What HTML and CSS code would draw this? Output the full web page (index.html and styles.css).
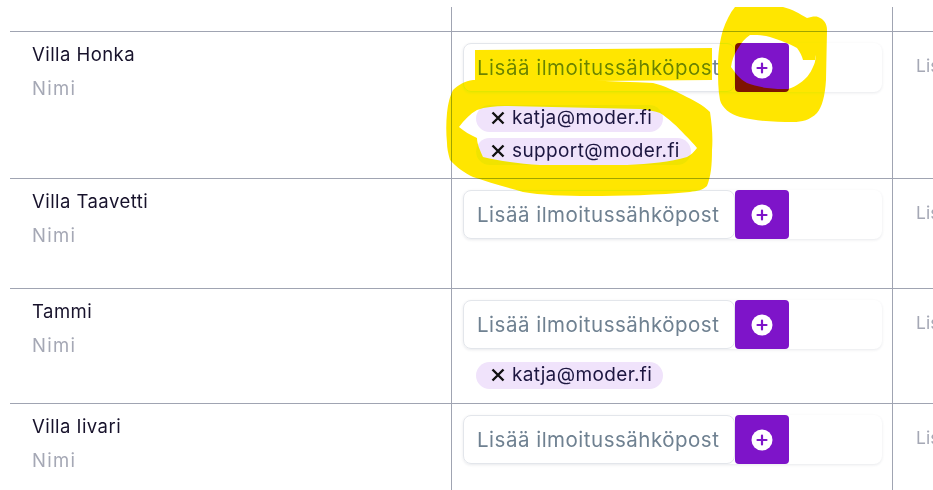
FILE: index.html
```html
<!DOCTYPE html>
<html lang="fi">
<head>
<meta charset="utf-8">
<title>Ilmoitussähköpostit</title>
<link rel="stylesheet" href="styles.css">
</head>
<body>
<div class="table">
  <div class="row stub"><div class="cell name"></div><div class="cell mail"></div><div class="cell extra"></div></div>

  <div class="row r1">
    <div class="cell name"><div class="title">Villa Honka</div><div class="label">Nimi</div></div>
    <div class="cell mail">
      <div class="field"><div class="input">Lisää ilmoitussähköpost</div><button class="add"><svg viewBox="0 0 22 22" width="22" height="22"><circle cx="11" cy="11" r="10.5" fill="#fff"/><path d="M11 6.5v9M6.5 11h9" stroke="#7e14c9" stroke-width="2.2" stroke-linecap="round"/></svg></button></div>
      <div class="tags">
        <span class="tag"><svg class="x" viewBox="0 0 14 14" width="14" height="14"><path d="M1.5 1.5l11 11M12.5 1.5l-11 11" stroke="#111" stroke-width="2.4"/></svg>katja@moder.fi</span>
        <span class="tag"><svg class="x" viewBox="0 0 14 14" width="14" height="14"><path d="M1.5 1.5l11 11M12.5 1.5l-11 11" stroke="#111" stroke-width="2.4"/></svg>support@moder.fi</span>
      </div>
    </div>
    <div class="cell extra"><div class="ghost">Lisää</div></div>
  </div>

  <div class="row r2">
    <div class="cell name"><div class="title">Villa Taavetti</div><div class="label">Nimi</div></div>
    <div class="cell mail">
      <div class="field"><div class="input">Lisää ilmoitussähköpost</div><button class="add"><svg viewBox="0 0 22 22" width="22" height="22"><circle cx="11" cy="11" r="10.5" fill="#fff"/><path d="M11 6.5v9M6.5 11h9" stroke="#7e14c9" stroke-width="2.2" stroke-linecap="round"/></svg></button></div>
    </div>
    <div class="cell extra"><div class="ghost">Lisää</div></div>
  </div>

  <div class="row r3">
    <div class="cell name"><div class="title">Tammi</div><div class="label">Nimi</div></div>
    <div class="cell mail">
      <div class="field"><div class="input">Lisää ilmoitussähköpost</div><button class="add"><svg viewBox="0 0 22 22" width="22" height="22"><circle cx="11" cy="11" r="10.5" fill="#fff"/><path d="M11 6.5v9M6.5 11h9" stroke="#7e14c9" stroke-width="2.2" stroke-linecap="round"/></svg></button></div>
      <div class="tags">
        <span class="tag"><svg class="x" viewBox="0 0 14 14" width="14" height="14"><path d="M1.5 1.5l11 11M12.5 1.5l-11 11" stroke="#111" stroke-width="2.4"/></svg>katja@moder.fi</span>
      </div>
    </div>
    <div class="cell extra"><div class="ghost">Lisää</div></div>
  </div>

  <div class="row r4">
    <div class="cell name"><div class="title">Villa Iivari</div><div class="label">Nimi</div></div>
    <div class="cell mail">
      <div class="field"><div class="input">Lisää ilmoitussähköpost</div><button class="add"><svg viewBox="0 0 22 22" width="22" height="22"><circle cx="11" cy="11" r="10.5" fill="#fff"/><path d="M11 6.5v9M6.5 11h9" stroke="#7e14c9" stroke-width="2.2" stroke-linecap="round"/></svg></button></div>
    </div>
    <div class="cell extra"><div class="ghost">Lisää</div></div>
  </div>
</div>

<svg class="marker" viewBox="0 0 933 490" width="933" height="490">
  <path fill="#ffe600" d="M735 7 L783 7 C792 9 800 14 807 18 C811 17 815 16 818 17 C824 19 827 24 827 30 L826 80 C825 96 822 107 817 113 C810 120 802 122 793 122 C775 122 755 121 740 117 C730 114 722 108 720 100 C718 90 718 78 718 67 C718 52 720 40 723 30 C726 21 730 13 735 7 Z M731 67 C732 60 734 55 737 50 C741 43 745 38 750 35 C757 35 764 35 770 37 C780 40 790 44 797 48 C800 52 802 56 803 60 L815 60 L815 55 C816 59 815 63 813 67 C810 74 806 79 800 83 C796 86 792 88 788 89 C781 89 774 89 767 88 C760 87 752 85 747 83 C743 81 740 78 737 75 C735 72 733 70 731 67 Z" fill-rule="evenodd"/>
  <path fill="#ffe600" d="M475 50 L712 48 L712 80 L475 82 Z"/>
  <path fill="#ffe600" fill-rule="evenodd" d="M473 80 C530 79 600 80 653 83 C665 86 675 91 683 95 C693 100 703 105 710 112 C712 125 713 138 712 150 C712 165 711 176 707 186 C703 190 697 191 690 192 C660 195 620 196 590 196 C565 196 540 195 523 192 C505 187 488 182 473 177 C465 173 456 167 450 160 C448 153 447 148 447 143 C446 133 446 123 447 113 C448 103 450 96 453 90 C458 85 465 81 473 80 Z M459 127 C464 120 470 114 477 110 C485 107 495 106 505 106 L640 109 C648 110 655 111 660 113 C668 118 678 127 685 135 C690 140 694 144 697 148 C694 152 691 155 687 157 C670 162 650 164 627 165 L540 165 C520 164 500 161 483 157 C480 150 477 144 477 138 C470 135 464 131 459 127 Z"/>
</svg>
</body>
</html>
```

FILE: styles.css
```css
html, body {
  margin: 0;
  padding: 0;
  width: 933px;
  height: 490px;
  overflow: hidden;
  background: #fff;
}
body {
  position: relative;
  font-family: Inter, "Open Sans", "Liberation Sans", sans-serif;
  color: #1a1530;
}
.table {
  padding: 7px 0 0 10px;
}
.row {
  display: grid;
  grid-template-columns: 441px 441px 200px;
  border-top: 1px solid #a0a4b2;
  width: 1082px;
}
.stub {
  border-top: 0;
  height: 24px;
}
.r1 { height: 146px; }
.r2 { height: 109px; }
.r3 { height: 114px; }
.r4 { height: 100px; }
.row > .cell { box-sizing: border-box; }
.name {
  padding: 9px 0 0 22px;
}
.mail {
  border-left: 1px solid #a0a4b2;
  padding: 11px 10px 0 11px;
}
.extra {
  border-left: 1px solid #a0a4b2;
  padding: 21px 0 0 23px;
}
.title {
  font-size: 18.5px;
  line-height: 26px;
  letter-spacing: 0.45px;
  color: #17122b;
}
.label {
  font-size: 18.5px;
  line-height: 26px;
  margin-top: 8px;
  color: #a5a8b5;
  letter-spacing: 1.3px;
}
.field {
  display: flex;
  height: 49px;
  width: 419px;
  border-radius: 8px;
  box-shadow: 0 1px 3px rgba(30, 40, 70, 0.1);
}
.input {
  box-sizing: border-box;
  width: 272px;
  height: 49px;
  border: 1px solid #e3e6eb;
  border-radius: 8px;
  padding: 0 0 0 13px;
  font-size: 20.5px;
  line-height: 47px;
  letter-spacing: 0.5px;
  color: #6f8191;
  white-space: nowrap;
  overflow: hidden;
}
.add {
  display: flex;
  align-items: center;
  justify-content: center;
  width: 54px;
  height: 49px;
  padding: 0;
  border: 0;
  border-radius: 4px;
  background: #7e14c9;
}
.tags {
  display: flex;
  flex-direction: column;
  align-items: flex-start;
  gap: 6px;
  margin: 13px 0 0 13px;
}
.tag {
  box-sizing: border-box;
  display: inline-flex;
  align-items: center;
  height: 27px;
  padding: 0 11px 2px 15px;
  border-radius: 14px;
  background: #f0e3fb;
  font-size: 19px;
  letter-spacing: 0.38px;
  color: #1c1640;
}
.x {
  margin: 1px 7px 0 0;
}
.ghost {
  font-size: 17.5px;
  line-height: 26px;
  color: #a5a8b5;
}
.marker {
  position: absolute;
  left: 0;
  top: 0;
  mix-blend-mode: darken;
  pointer-events: none;
}
```
